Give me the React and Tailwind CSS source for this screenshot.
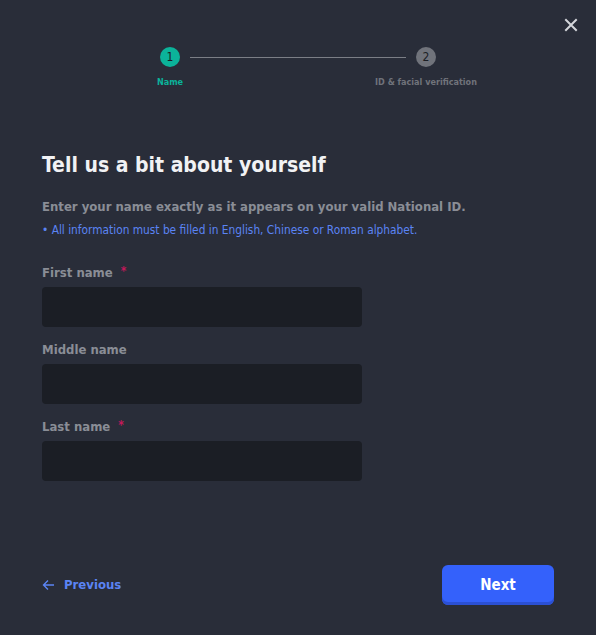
import React from "react";

function Field({ label, required }) {
  return (
    <div className="flex flex-col">
      <div className="flex items-center h-[18px] text-[13px] font-semibold text-[#8a8d96]">
        <span>{label}</span>
        {required && <span className="ml-[8px] text-[#c2185b] text-[12px] -mt-[4px]">*</span>}
      </div>
      <div className="mt-[5px] h-[40px] w-[320px] rounded-[4px] bg-[#1b1e25]" />
    </div>
  );
}

export default function App() {
  return (
    <div
      className="w-[596px] h-[635px] bg-[#292d39] flex flex-col"
      style={{ fontFamily: "'DejaVu Sans Condensed', 'Roboto', sans-serif" }}
    >
      <div className="flex justify-end pt-[18px] pr-[18px]">
        <svg width="14" height="14" viewBox="0 0 14 14" className="text-[#d4d6db]">
          <path d="M2 2 L12 12 M12 2 L2 12" stroke="currentColor" strokeWidth="2" strokeLinecap="square" />
        </svg>
      </div>

      {/* stepper */}
      <div className="mt-[15px] h-[60px] flex">
        <div className="ml-[120px] w-[100px] flex flex-col items-center">
          <div className="w-[20px] h-[20px] rounded-full bg-[#0bb39a] flex items-center justify-center text-[12px] text-[#1b1e25]">1</div>
          <div className="mt-[9px] text-[9px] font-semibold text-[#0bb39a]">Name</div>
        </div>
        <div className="-mx-[30px] mt-[10px] w-[216px] h-px bg-[#7b7e86]" />
        <div className="w-[100px] flex flex-col items-center">
          <div className="w-[20px] h-[20px] rounded-full bg-[#70737b] flex items-center justify-center text-[12px] text-[#1b1e25]">2</div>
          <div className="mt-[9px] text-[9px] font-semibold text-[#70737b] whitespace-nowrap">ID &amp; facial verification</div>
        </div>
      </div>

      <div className="px-[42px] mt-[44px]">
        <h1 className="text-[21px] font-bold text-[#f1f2f4] leading-[28px]">Tell us a bit about yourself</h1>
        <p className="mt-[18px] text-[13px] font-semibold text-[#8a8d96]">
          Enter your name exactly as it appears on your valid National ID.
        </p>
        <p className="mt-[5px] text-[11.8px] text-[#5b84f4]">
          • All information must be filled in English, Chinese or Roman alphabet.
        </p>

        <div className="mt-[25px] flex flex-col gap-[14px]">
          <Field label="First name" required />
          <Field label="Middle name" />
          <Field label="Last name" required />
        </div>
      </div>

      <div className="mt-auto mb-[30px] px-[42px] flex items-center justify-between">
        <div className="flex items-center gap-[9px] text-[#5b84f4] text-[13px] font-semibold">
          <svg width="13" height="12" viewBox="0 0 13 12" fill="none">
            <path d="M12 6 H1.5 M6 1.5 L1.5 6 L6 10.5" stroke="currentColor" strokeWidth="1.4" />
          </svg>
          <span>Previous</span>
        </div>
        <div className="w-[112px] h-[40px] rounded-[6px] bg-[#3461fb] shadow-[inset_0_-3px_0_#2b50d4] flex items-center justify-center text-[15px] font-bold text-white">
          Next
        </div>
      </div>
    </div>
  );
}
